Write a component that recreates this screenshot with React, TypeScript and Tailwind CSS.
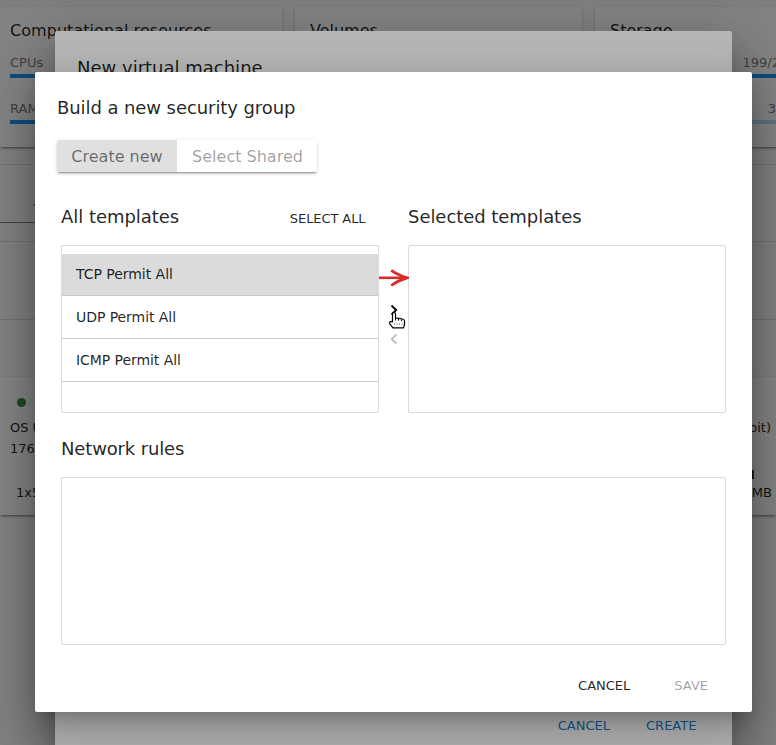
import React from 'react';

const DIALOG =
  'absolute rounded-[2px] bg-white shadow-[0_11px_15px_-7px_rgba(0,0,0,0.2),0_24px_38px_3px_rgba(0,0,0,0.14),0_9px_46px_8px_rgba(0,0,0,0.12)]';
const CARD =
  'bg-white shadow-[0_3px_1px_-2px_rgba(0,0,0,0.2),0_2px_2px_0_rgba(0,0,0,0.14),0_1px_5px_0_rgba(0,0,0,0.12)]';

function Backdrop() {
  return <div className="absolute inset-0 bg-black/[0.288]" />;
}

function Meter({ label, value, full }: { label: string; value: string; full?: boolean }) {
  return (
    <div className="h-[46px] text-[13px] leading-[18px] text-black/55">
      <div className="flex h-[20px] justify-between">
        <span>{label}</span>
        <span>{value}</span>
      </div>
      <div className={full ? 'h-1 bg-[#2196f3]' : 'h-1 bg-[#bbdefb]'} />
    </div>
  );
}

function Dashboard() {
  return (
    <div className="h-full bg-[#fafafa] pt-[7px] text-[13px] text-black/87">
      <div className="flex h-[140px] gap-[13px]">
        <div className={`w-[282px] shrink-0 rounded-[2px] px-[10px] pt-[12px] ${CARD}`}>
          <h3 className="mb-[12px] text-base leading-[23px] tracking-[0.05px]">Computational resources</h3>
          <Meter label="CPUs" value="" full />
          <Meter label="RAM" value="" full />
        </div>
        <div className={`w-[287px] shrink-0 rounded-[2px] px-[15px] pt-[12px] ${CARD}`}>
          <h3 className="text-base leading-[23px]">Volumes</h3>
        </div>
        <div className={`w-[185px] shrink-0 rounded-l-[2px] pl-[15px] pt-[12px] ${CARD}`}>
          <h3 className="mb-[12px] text-base leading-[23px]">Storage</h3>
          <Meter label="" value="199/2" full />
          <div className="mr-[4px]">
            <Meter label="" value="3" />
          </div>
        </div>
      </div>
      <div className="mt-[17px] h-[78px] border-y border-black/12">
        <div className="flex h-[58px] w-[40px] items-center justify-end border-b border-black/50 pt-[26px]">
          <span className="mr-[-3px] border-x-[5px] border-t-[5px] border-x-transparent border-t-black/60" />
        </div>
      </div>
      <div className="h-[78px] border-b border-black/12" />
      <div className="h-[57px]" />
      <div className={`flex h-[138px] justify-between ${CARD}`}>
        <div className="pl-[10px] pt-[21px]">
          <div className="ml-[7px] size-[9px] rounded-full bg-[#388e3c]" />
          <p className="mt-[10px] leading-[22px]">OS U</p>
          <p className="leading-[20px]">176</p>
          <p className="ml-[6px] mt-[23px] leading-[22px]">1x5</p>
        </div>
        <div className="w-[32px] pt-[40px]">
          <p className="-ml-[2px] w-[29px] text-right leading-[22px]">bit)</p>
          <p className="-ml-[2px] mt-[25px] w-[12px] text-right font-bold leading-[22px]">M</p>
          <p className="w-[28px] text-right leading-[14px]">MB</p>
        </div>
      </div>
    </div>
  );
}

function TransferArrow() {
  return (
    <svg className="absolute left-[379px] top-[268px]" width="30" height="20" viewBox="0 0 30 20" fill="none">
      <path d="M0 9.8H28" stroke="#d92b2b" strokeWidth="2.6" />
      <path d="M12.2 2.3Q18 6.5 28 9.8Q18 13 12.2 17.5" stroke="#d92b2b" strokeWidth="2.8" />
    </svg>
  );
}

function HandCursor() {
  return (
    <svg className="absolute left-[388px] top-[311px]" width="18" height="19" viewBox="0 0 18 19" fill="none">
      <path
        d="M4.5 10V3.2Q4.5 1.5 6 1.5Q7.5 1.5 7.5 3.2V6.8L14.5 8Q16.5 8.4 16.5 10.3V13.5L15.5 16.9H5L2 13.2Q1 10.7 2.6 10.4L4.5 11Z"
        fill="white"
        stroke="black"
        strokeWidth="1.2"
        strokeLinejoin="round"
      />
      <path d="M7.5 7V9.5M10.5 7.7V9.7M13.5 8.3V10" stroke="black" />
      <path d="M6.5 12v2M9 12v2M11.5 12v2M14 12v2" stroke="#999" strokeWidth="0.9" />
    </svg>
  );
}

function Chevron({ dir, className }: { dir: 'left' | 'right'; className: string }) {
  return (
    <svg className={className} width="8" height="12" viewBox="0 0 8 12" fill="none">
      <path d={dir === 'right' ? 'M1.5 1.5L6.2 6L1.5 10.5' : 'M6.4 1.5L1.7 6L6.4 10.5'} stroke="currentColor" strokeWidth="1.8" />
    </svg>
  );
}

export default function App() {
  const templates = ['TCP Permit All', 'UDP Permit All', 'ICMP Permit All'];
  return (
    <div className="relative h-[745px] w-[776px] overflow-hidden font-['DejaVu_Sans',sans-serif]">
      <Dashboard />
      <Backdrop />

      <div className={`left-[55px] top-[31px] flex h-[740px] w-[677px] flex-col justify-between px-[22px] pt-[24px] ${DIALOG}`}>
        <h2 className="text-lg leading-[26px] text-black/87">New virtual machine</h2>
        <div className="mb-[33px] flex justify-end gap-[36px] pr-[13.6px] text-[13px] leading-[24px] text-[#1a7cc8]">
          <span>CANCEL</span>
          <span>CREATE</span>
        </div>
      </div>
      <Backdrop />

      <div className={`left-[35px] top-[72px] h-[640px] w-[717px] px-[26px] pt-[23px] text-black/87 ${DIALOG}`}>
        <h2 className="-ml-[4px] text-lg leading-[26px] tracking-[-0.08px]">Build a new security group</h2>
        <div className="-ml-[4px] mt-[19px] flex h-[32px] w-[260px] rounded-[2px] text-base leading-[33px] shadow-[0_3px_1px_-2px_rgba(0,0,0,0.2),0_2px_2px_0_rgba(0,0,0,0.14),0_1px_5px_0_rgba(0,0,0,0.12)]">
          <span className="w-[120px] rounded-l-[2px] bg-[#e0e0e0] text-center text-black/54">Create new</span>
          <span className="flex-1 pl-[1px] text-center text-black/38">Select Shared</span>
        </div>

        <div className="mt-[32px] flex">
          <section className="w-[318px]">
            <div className="flex h-[41px] items-start justify-between pr-[13.5px]">
              <h3 className="text-lg leading-[26px] tracking-[-0.04px]">All templates</h3>
              <span className="pt-[3px] text-[13px] leading-[24px] tracking-[-0.08px]">SELECT ALL</span>
            </div>
            <ul className="h-[168px] rounded-[2px] border border-[#dbdbdb] pt-[8px]">
              {templates.map((name, i) => (
                <li
                  key={name}
                  className={
                    i === 0
                      ? 'h-[42px] border-b border-[#c8c8c8] bg-[#dbdbdb] pl-[14px] text-sm leading-[41px] tracking-[-0.03px]'
                      : 'h-[43px] border-b border-[#c8c8c8] pl-[14px] text-sm leading-[42px] tracking-[-0.06px]'
                  }
                >
                  {name}
                </li>
              ))}
            </ul>
          </section>
          <div className="flex w-[29px] flex-col items-center gap-[17px] pt-[100px]">
            <Chevron dir="right" className="text-black" />
            <Chevron dir="left" className="text-[#bdbdbd]" />
          </div>
          <section className="w-[318px]">
            <h3 className="h-[41px] text-lg leading-[26px] tracking-[-0.05px]">Selected templates</h3>
            <div className="h-[168px] rounded-[2px] border border-[#dbdbdb]" />
          </section>
        </div>

        <h3 className="mb-[15px] mt-[23px] text-lg leading-[26px] tracking-[-0.15px]">Network rules</h3>
        <div className="h-[168px] rounded-[2px] border border-[#dbdbdb]" />
        <div className="mt-[29px] flex justify-end gap-[44px] pr-[18px] text-[13px] leading-[24px]">
          <span>CANCEL</span>
          <span className="text-black/38">SAVE</span>
        </div>
      </div>

      <TransferArrow />
      <HandCursor />
    </div>
  );
}
